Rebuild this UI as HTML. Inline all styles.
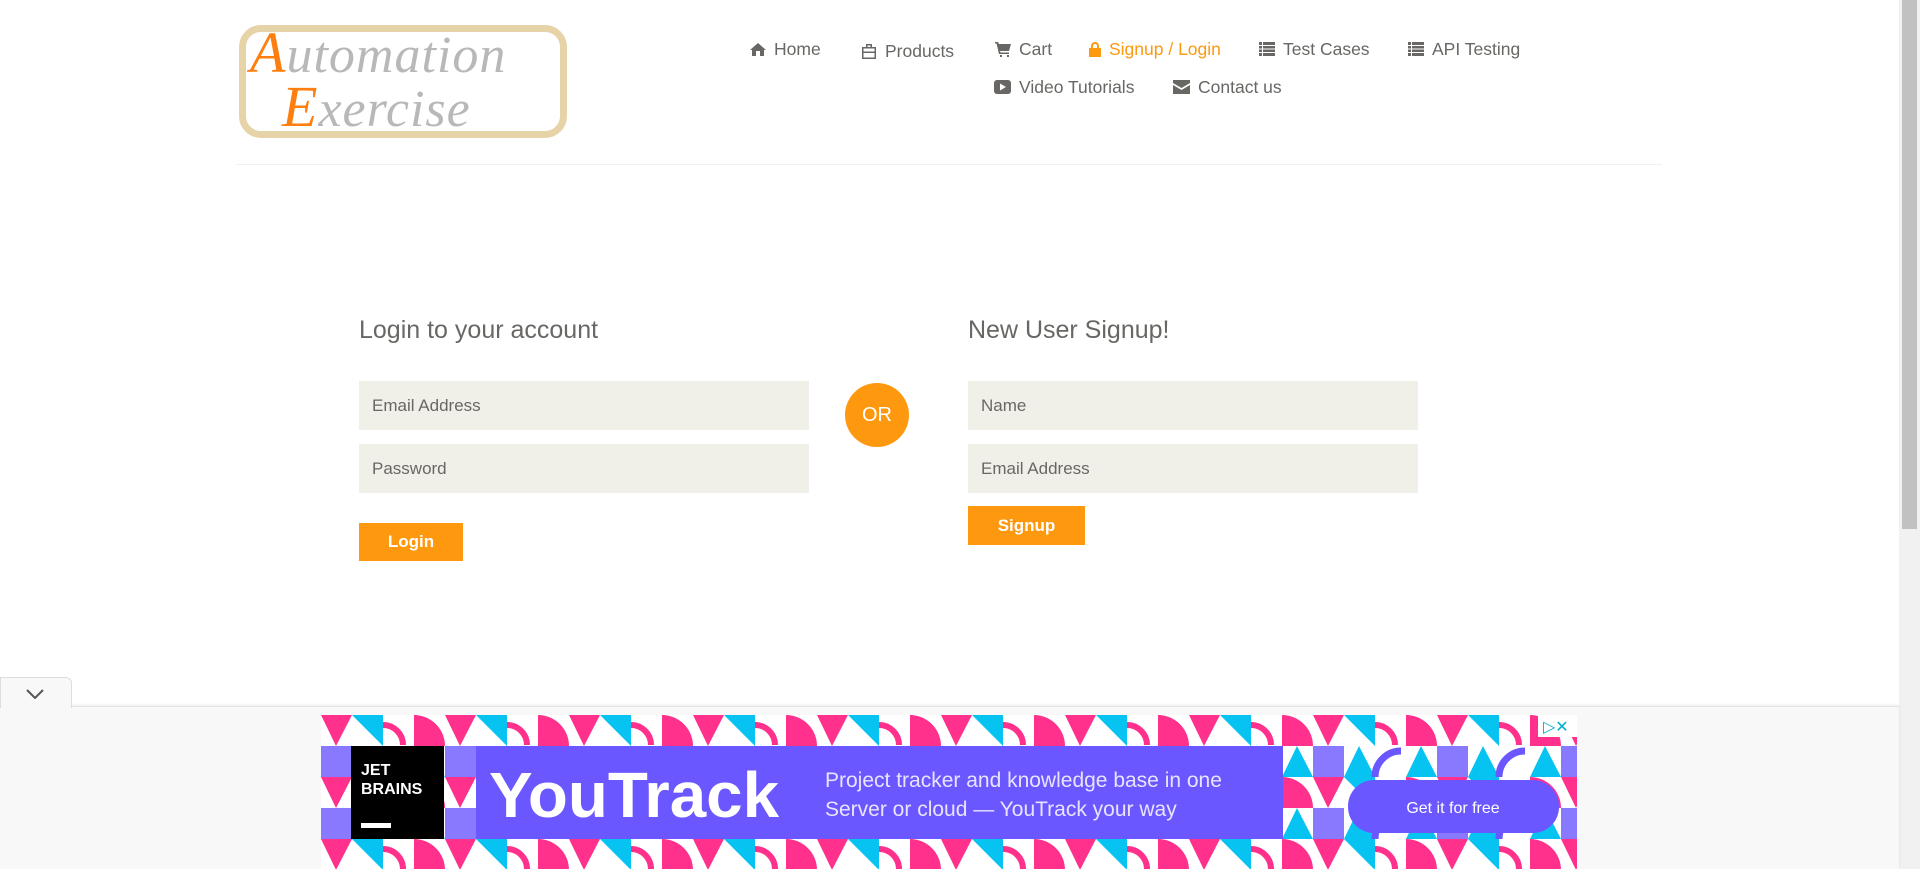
<!DOCTYPE html>
<html><head><meta charset="utf-8"><style>
*{box-sizing:border-box;margin:0;padding:0}
body{width:1920px;height:869px;overflow:hidden;background:#fff;font-family:"Liberation Sans",Arial,sans-serif;color:#696763;position:relative}
.abs{position:absolute}
.nav{position:absolute;font-size:17.5px;color:#696763;white-space:nowrap;display:flex;align-items:center;gap:8px;line-height:20px}
.nav svg{fill:#696763}
.nav.act{color:#FE980F}.nav.act svg{fill:#FE980F}
h2{position:absolute;font-weight:400;font-size:25px;color:#696763}
.inp{position:absolute;background:#F0F0E9;height:49px;width:450px;font-size:17px;color:#696763;padding:15px 13px;line-height:19px}
.btn{position:absolute;background:#FE980F;color:#fff;font-size:17px;text-align:center;font-weight:bold}
</style></head><body>
<!-- logo -->
<div class="abs" style="left:239px;top:25px;width:328px;height:113px;border:7px solid #e6d3a8;border-radius:22px;background:#fff"></div>
<div class="abs" style="left:250px;top:26px;font-family:'Liberation Serif',serif;font-style:italic;font-size:52px;color:#b8b8b8;letter-spacing:1px;line-height:54px"><span style="color:#FE7F0F;font-size:58px">A</span>utomation</div>
<div class="abs" style="left:282px;top:80px;font-family:'Liberation Serif',serif;font-style:italic;font-size:52px;color:#b8b8b8;letter-spacing:1px;line-height:54px"><span style="color:#FE7F0F;font-size:58px">E</span>xercise</div>

<div class="nav" style="left:750px;top:39px"><svg width="16" height="14" viewBox="0 0 16 14"><path d="M8 1L0 8h2v6h4V9h4v5h4V8h2z"/></svg>Home</div>
<div class="nav" style="left:861px;top:41px"><svg width="16" height="15" viewBox="0 0 16 15"><path d="M5 0h6v3h4v12H1V3h4zM6.5 1.5v1.5h3V1.5zM2.5 4.5v3h11v-3zM2.5 9v4.5h11V9z"/></svg>Products</div>
<div class="nav" style="left:995px;top:39px"><svg width="16" height="15" viewBox="0 0 16 15"><path d="M0 0h3l1 2h12l-2 7H5l.5 1.5H14V12H4L1.5 1.5H0zM5 13h2v2H5zm7 0h2v2h-2z"/></svg>Cart</div>
<div class="nav act" style="left:1089px;top:39px"><svg width="12" height="15" viewBox="0 0 12 15"><path d="M2 6V4a4 4 0 018 0v2h2v9H0V6zm2 0h4V4a2 2 0 00-4 0z"/></svg>Signup / Login</div>
<div class="nav" style="left:1259px;top:39px"><svg width="16" height="14" viewBox="0 0 16 14"><path d="M0 0h3v3H0zm4 0h12v3H4zM0 4h3v2.5H0zm4 0h12v2.5H4zM0 7.5h3V10H0zm4 0h12V10H4zM0 11h3v3H0zm4 0h12v3H4z"/></svg>Test Cases</div>
<div class="nav" style="left:1408px;top:39px"><svg width="16" height="14" viewBox="0 0 16 14"><path d="M0 0h3v3H0zm4 0h12v3H4zM0 4h3v2.5H0zm4 0h12v2.5H4zM0 7.5h3V10H0zm4 0h12V10H4zM0 11h3v3H0zm4 0h12v3H4z"/></svg>API Testing</div>
<div class="nav" style="left:994px;top:77px"><svg width="17" height="14" viewBox="0 0 17 14"><rect width="17" height="14" rx="3"/><path d="M6 3.5v7l6-3.5z" fill="#fff"/></svg>Video Tutorials</div>
<div class="nav" style="left:1173px;top:77px"><svg width="17" height="14" viewBox="0 0 17 14"><path d="M0 0h17v3L8.5 8 0 3zM0 5l8.5 5L17 5v9H0z"/></svg>Contact us</div>

<div class="abs" style="left:236px;top:164px;width:1426px;height:1px;background:#f0f0f0"></div>

<h2 style="left:359px;top:316px">Login to your account</h2>
<div class="inp" style="left:359px;top:381px">Email Address</div>
<div class="inp" style="left:359px;top:444px">Password</div>
<div class="btn" style="left:359px;top:523px;width:104px;height:38px;line-height:38px">Login</div>
<div class="abs" style="left:845px;top:383px;width:64px;height:64px;border-radius:50%;background:#FE980F;color:#fff;font-size:20px;text-align:center;line-height:64px">OR</div>
<h2 style="left:968px;top:316px">New User Signup!</h2>
<div class="inp" style="left:968px;top:381px">Name</div>
<div class="inp" style="left:968px;top:444px">Email Address</div>
<div class="btn" style="left:968px;top:506px;width:117px;height:39px;line-height:39px">Signup</div>

<!-- scrollbar -->
<div class="abs" style="left:1899px;top:0;width:21px;height:869px;background:#f1f1f1"></div>
<div class="abs" style="left:1902px;top:0;width:15px;height:529px;background:#c1c1c1"></div>

<!-- bottom ad bar -->
<div class="abs" style="left:0;top:706px;width:1899px;height:163px;background:#f8f8f8;border-top:1px solid #e4e4e4;box-shadow:0 -1px 3px rgba(0,0,0,.08)"></div>
<div class="abs" style="left:0;top:677px;width:72px;height:31px;background:#f8f8f8;border:1px solid #ddd;border-bottom:none;border-radius:0 6px 0 0"></div>
<svg class="abs" style="left:26px;top:689px" width="18" height="10" viewBox="0 0 18 10"><path d="M1 1l8 8 8-8" stroke="#555" stroke-width="2" fill="none"/></svg>

<svg class="abs" style="left:321px;top:715px" width="1256" height="154" viewBox="0 0 1256 154">
<defs><pattern id="p" width="124" height="62" patternUnits="userSpaceOnUse">
<rect width="124" height="62" fill="#fff"/>
<path d="M0 0h31L15 31z" fill="#ff318c"/><path d="M31 62L46 31 62 62z" fill="#07c3f2"/>
<path d="M62 62a26 26 0 0 1 26-26" fill="none" stroke="#6b57ff" stroke-width="7"/>
<path d="M62 10a20 20 0 0 1 20 20" fill="none" stroke="#ff318c" stroke-width="6"/>
<path d="M93 0a31 31 0 0 1 31 31H93z" fill="#ff318c"/><path d="M93 62L108 31 124 62z" fill="#07c3f2"/>
<path d="M0 31h31v31H0z" fill="#6b57ff" opacity=".8"/>
<path d="M31 0h31v31z" fill="#07c3f2"/>
</pattern></defs>
<rect width="1256" height="154" fill="url(#p)"/>
<rect x="30" y="31" width="93" height="93" fill="#000"/>
<text x="40" y="60" fill="#fff" font-family="Liberation Sans" font-weight="bold" font-size="16">JET</text>
<text x="40" y="79" fill="#fff" font-family="Liberation Sans" font-weight="bold" font-size="16">BRAINS</text>
<rect x="40" y="108" width="30" height="5" fill="#fff"/>
<rect x="155" y="31" width="807" height="93" fill="#6b57ff"/>
<text x="168" y="102" fill="#fff" font-family="Liberation Sans" font-weight="bold" font-size="64" textLength="290" lengthAdjust="spacingAndGlyphs">YouTrack</text>
<text x="504" y="72" fill="#e8e4ff" font-family="Liberation Sans" font-size="21">Project tracker and knowledge base in one</text>
<text x="504" y="101" fill="#e8e4ff" font-family="Liberation Sans" font-size="21">Server or cloud — YouTrack your way</text>
<rect x="1027" y="65" width="211" height="53" rx="26" fill="#6b57ff"/>
<text x="1132" y="98" fill="#fff" font-family="Liberation Sans" font-size="16" text-anchor="middle">Get it for free</text>
<rect x="1217" y="0" width="39" height="22" fill="#fff"/>
<text x="1222" y="17" fill="#00aecd" font-family="Liberation Sans" font-size="16">▷✕</text>
</svg>
</body></html>
